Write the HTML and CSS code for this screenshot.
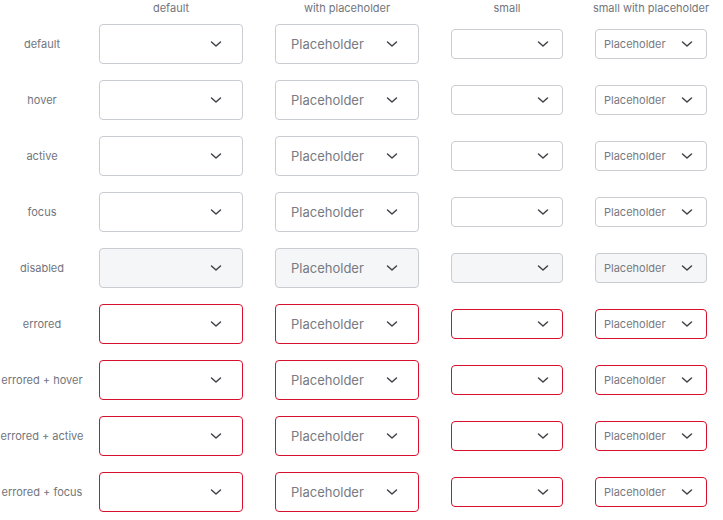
FILE: index.html
```html
<!DOCTYPE html>
<html>
<head>
<meta charset="utf-8">
<link rel="stylesheet" href="styles.css">
</head>
<body>
<div class="grid">
  <div class="row head">
    <div class="label"></div>
    <div class="cell lg">default</div>
    <div class="cell lg">with placeholder</div>
    <div class="cell sm">small</div>
    <div class="cell sm">small with placeholder</div>
  </div>
</div>
<script src="app.js"></script>
</body>
</html>
```

FILE: app.js
```js
const states = [
  ["default", ""], ["hover", ""], ["active", ""], ["focus", ""],
  ["disabled", "disabled"], ["errored", "error"], ["errored + hover", "error"],
  ["errored + active", "error"], ["errored + focus", "error"]
];
const chev = '<svg class="chev" viewBox="0 0 16 16" width="16" height="16"><path d="M3.5 6l4.5 4 4.5-4" fill="none" stroke="#3f4248" stroke-width="1.5" stroke-linecap="round" stroke-linejoin="round"/></svg>';
const grid = document.querySelector('.grid');
for (const [name, cls] of states) {
  const row = document.createElement('div');
  row.className = 'row';
  const box = (size, ph) => `<div class="cell ${size}"><div class="select ${size} ${cls}"><span class="ph">${ph ? 'Placeholder' : ''}</span>${chev}</div></div>`;
  row.innerHTML = `<div class="label">${name}</div>` + box('lg', false) + box('lg', true) + box('sm', false) + box('sm', true);
  grid.appendChild(row);
}
```

FILE: styles.css
```css
body {
  margin: 0;
  background: #fff;
  font-family: Inter, "Noto Sans", sans-serif;
}
.grid {
  display: flex;
  flex-direction: column;
  gap: 16px;
}
.row {
  display: flex;
  align-items: center;
  height: 40px;
  gap: 32px;
}
.row.head {
  height: 16px;
  margin-bottom: -8px;
  font-size: 11px;
  color: #72757c;
}
.label {
  width: 84px;
  margin-right: -17px;
  text-align: center;
  font-size: 11px;
  color: #72757c;
  white-space: nowrap;
}
.cell {
  display: flex;
  justify-content: center;
  white-space: nowrap;
}
.cell.lg { width: 144px; }
.cell.sm { width: 112px; }
.select {
  box-sizing: border-box;
  display: flex;
  align-items: center;
  justify-content: space-between;
  border: 1px solid #c9ccd1;
  border-radius: 4px;
  background: #fff;
}
.select.lg {
  width: 144px;
  height: 40px;
  padding: 0 18px 0 15px;
  font-size: 13px;
  line-height: 16px;
}
.select.sm {
  width: 112px;
  height: 30px;
  padding: 0 11px 0 8px;
  font-size: 11px;
  line-height: 14px;
}
.select.disabled {
  background: #f5f6f8;
}
.select.error {
  border-color: #d8102f;
}
.ph {
  color: #777a81;
}
.chev {
  flex: none;
}
```
